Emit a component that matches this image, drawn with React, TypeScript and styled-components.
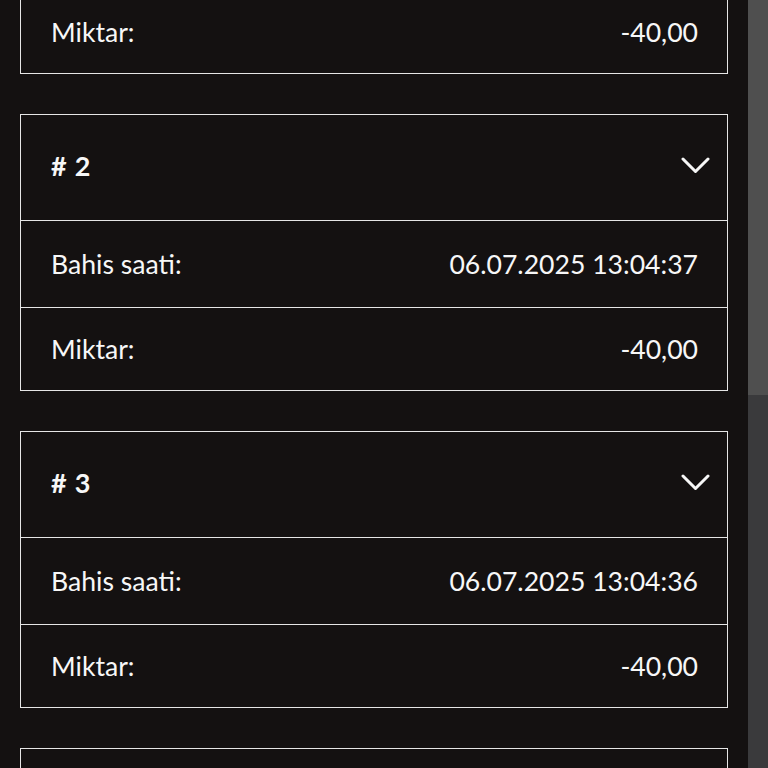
import React, { useLayoutEffect, useRef } from 'react';
import styled, { createGlobalStyle } from 'styled-components';

// --- Settings ---------------------------------------------------------------
const BG = '#141111';
const LINE = '#e6e6e6';
const TEXT = '#f7f7f7';

type Bet = { id: number; time: string; amount: string };

const BETS: Bet[] = [
  { id: 1, time: '06.07.2025 13:04:38', amount: '-40,00' },
  { id: 2, time: '06.07.2025 13:04:37', amount: '-40,00' },
  { id: 3, time: '06.07.2025 13:04:36', amount: '-40,00' },
  { id: 4, time: '06.07.2025 13:04:35', amount: '-40,00' },
];

const GlobalStyle = createGlobalStyle`
  html, body {
    margin: 0;
    padding: 0;
    background: ${BG};
    overflow: hidden;
  }
  body {
    font-family: Lato, "Noto Sans", sans-serif;
    color: ${TEXT};
  }
`;

// --- Layout ---------------------------------------------------------------
const Screen = styled.div`
  display: grid;
  grid-template-columns: 1fr 20px;
  height: 768px;
  background: ${BG};
`;

const Viewport = styled.div`
  overflow: hidden;
  height: 768px;
`;

const List = styled.div`
  display: flex;
  flex-direction: column;
  gap: 40px;
  padding: 20px 20px 40px 20px;
`;

const Track = styled.div`
  background: #3a3a3c;
  display: flex;
  flex-direction: column;
`;

const Thumb = styled.div`
  height: 395px;
  background: #4f4f4f;
`;

// --- Card ---------------------------------------------------------------
const Card = styled.section`
  border: 1px solid ${LINE};
  display: flex;
  flex-direction: column;
`;

const Header = styled.div`
  height: 106px;
  box-sizing: border-box;
  display: flex;
  align-items: center;
  justify-content: space-between;
  padding: 0 17px 5px 30px;
  border-bottom: 1px solid ${LINE};
`;

const Title = styled.h3`
  margin: 0;
  font-size: 27px;
  font-weight: 700;
  letter-spacing: 0.8px;
`;

const Row = styled.div<{ $last?: boolean }>`
  height: ${(p) => (p.$last ? 82 : 86)}px;
  display: flex;
  align-items: center;
  justify-content: space-between;
  padding: 0 29px 0 30px;
  font-size: 26.6px;
  border-bottom: ${(p) => (p.$last ? 'none' : `1px solid ${LINE}`)};
`;

const Chevron = () => (
  <svg width="29" height="17" viewBox="0 0 29 17" fill="none">
    <path d="M2 2 L14.5 14.5 L27 2" stroke={TEXT} strokeWidth="3" strokeLinecap="round" strokeLinejoin="round" />
  </svg>
);

function BetCard({ bet }: { bet: Bet }) {
  return (
    <Card>
      <Header>
        <Title># {bet.id}</Title>
        <Chevron />
      </Header>
      <Row>
        <span>Bahis saati:</span>
        <span>{bet.time}</span>
      </Row>
      <Row $last>
        <span>Miktar:</span>
        <span>{bet.amount}</span>
      </Row>
    </Card>
  );
}

export default function App() {
  const viewRef = useRef<HTMLDivElement>(null);

  useLayoutEffect(() => {
    // first card sits partly above the visible area
    if (viewRef.current) viewRef.current.scrollTop = 223;
  }, []);

  return (
    <>
      <GlobalStyle />
      <Screen>
        <Viewport ref={viewRef}>
          <List>
            {BETS.map((b) => (
              <BetCard key={b.id} bet={b} />
            ))}
          </List>
        </Viewport>
        <Track>
          <Thumb />
        </Track>
      </Screen>
    </>
  );
}
